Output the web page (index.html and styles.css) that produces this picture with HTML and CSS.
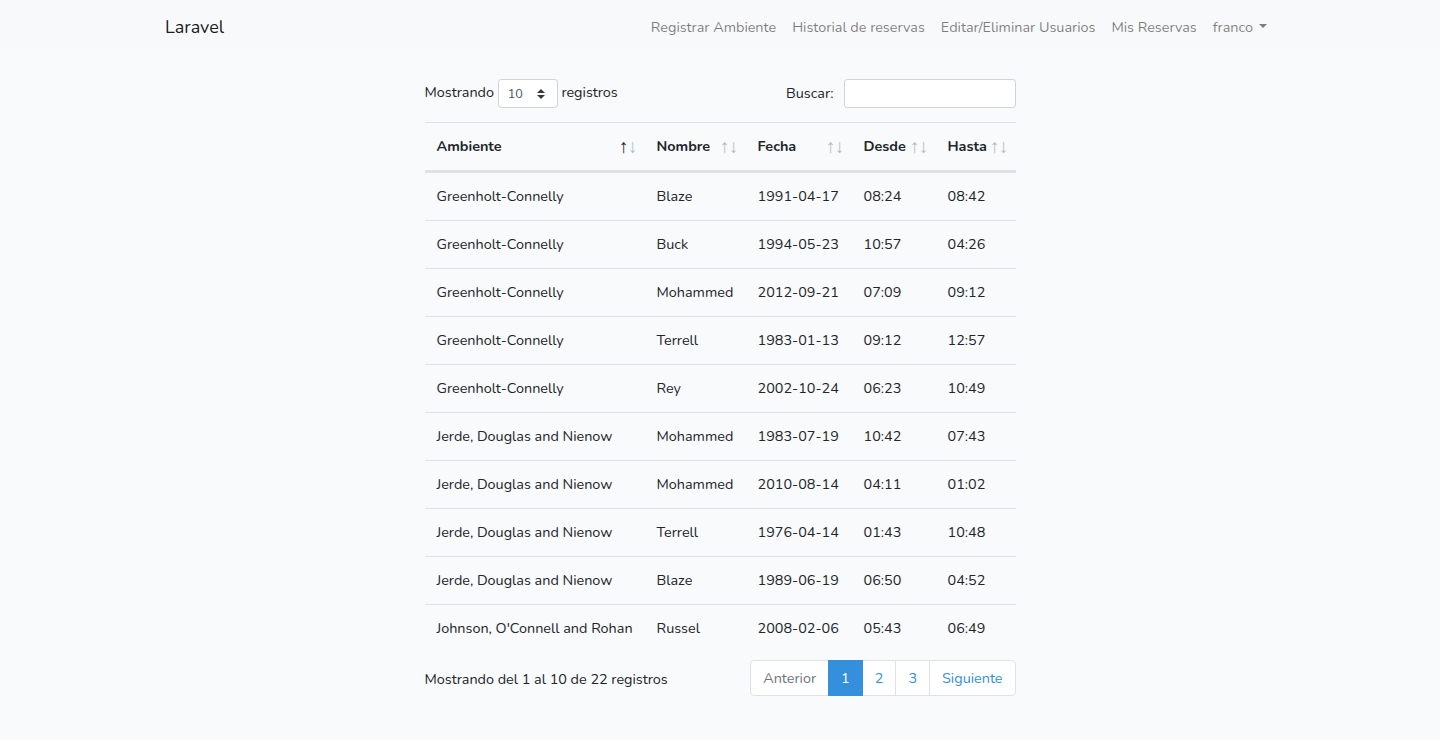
FILE: index.html
```html
<!DOCTYPE html>
<html lang="es">
<head>
<meta charset="utf-8">
<title>Laravel</title>
<link rel="stylesheet" href="styles.css">
</head>
<body>
<nav class="navbar">
  <div class="container nav-inner">
    <a class="brand" href="#">Laravel</a>
    <ul class="nav-links">
      <li><a href="#">Registrar Ambiente</a></li>
      <li><a href="#">Historial de reservas</a></li>
      <li><a href="#">Editar/Eliminar Usuarios</a></li>
      <li><a href="#">Mis Reservas</a></li>
      <li><a href="#" class="dropdown-toggle">franco</a></li>
    </ul>
  </div>
</nav>
<main class="main">
  <div class="dt">
    <div class="dt-top">
      <label class="dt-length">Mostrando <select class="dt-select"><option>10</option><option>25</option><option>50</option><option>100</option></select> registros</label>
      <label class="dt-filter">Buscar:<input type="search" class="dt-input"></label>
    </div>
    <table class="dt-table">
      <colgroup>
        <col class="c1"><col class="c2"><col class="c3"><col class="c4"><col class="c5">
      </colgroup>
      <thead>
        <tr>
          <th class="sort sort-asc">Ambiente</th>
          <th class="sort">Nombre</th>
          <th class="sort">Fecha</th>
          <th class="sort">Desde</th>
          <th class="sort">Hasta</th>
        </tr>
      </thead>
      <tbody>
        <tr><td>Greenholt-Connelly</td><td>Blaze</td><td>1991-04-17</td><td>08:24</td><td>08:42</td></tr>
        <tr><td>Greenholt-Connelly</td><td>Buck</td><td>1994-05-23</td><td>10:57</td><td>04:26</td></tr>
        <tr><td>Greenholt-Connelly</td><td>Mohammed</td><td>2012-09-21</td><td>07:09</td><td>09:12</td></tr>
        <tr><td>Greenholt-Connelly</td><td>Terrell</td><td>1983-01-13</td><td>09:12</td><td>12:57</td></tr>
        <tr><td>Greenholt-Connelly</td><td>Rey</td><td>2002-10-24</td><td>06:23</td><td>10:49</td></tr>
        <tr><td>Jerde, Douglas and Nienow</td><td>Mohammed</td><td>1983-07-19</td><td>10:42</td><td>07:43</td></tr>
        <tr><td>Jerde, Douglas and Nienow</td><td>Mohammed</td><td>2010-08-14</td><td>04:11</td><td>01:02</td></tr>
        <tr><td>Jerde, Douglas and Nienow</td><td>Terrell</td><td>1976-04-14</td><td>01:43</td><td>10:48</td></tr>
        <tr><td>Jerde, Douglas and Nienow</td><td>Blaze</td><td>1989-06-19</td><td>06:50</td><td>04:52</td></tr>
        <tr><td>Johnson, O'Connell and Rohan</td><td>Russel</td><td>2008-02-06</td><td>05:43</td><td>06:49</td></tr>
      </tbody>
    </table>
    <div class="dt-bottom">
      <div class="dt-info">Mostrando del 1 al 10 de 22 registros</div>
      <ul class="pagination">
        <li class="page disabled"><a href="#">Anterior</a></li>
        <li class="page active"><a href="#">1</a></li>
        <li class="page"><a href="#">2</a></li>
        <li class="page"><a href="#">3</a></li>
        <li class="page"><a href="#">Siguiente</a></li>
      </ul>
    </div>
  </div>
</main>
</body>
</html>
```
FILE: styles.css
```css
* { box-sizing: border-box; }
html, body { margin: 0; padding: 0; }
body {
  background: #f8fafc;
  color: #212529;
  font-family: "Nunito", Lato, "Noto Sans", sans-serif;
  font-size: 14.4px;
  line-height: 1.6;
}
a { text-decoration: none; }

.navbar {
  background: #f8f9fa;
  padding: 8px 16px;
}
.container {
  max-width: 1140px;
  margin: 0 auto;
  padding: 0 15px;
}
.nav-inner {
  display: flex;
  align-items: center;
  justify-content: space-between;
}
.brand {
  color: rgba(0,0,0,.9);
  font-size: 18px;
  padding: 5px 0;
  line-height: 1.6;
  margin-right: 16px;
}
.nav-links {
  display: flex;
  list-style: none;
  margin: 0;
  padding: 0;
}
.nav-links a {
  display: block;
  padding: 8px;
  color: rgba(0,0,0,.5);
}
.dropdown-toggle::after {
  content: "";
  display: inline-block;
  margin-left: 6px;
  vertical-align: .255em;
  border-top: .3em solid;
  border-right: .3em solid transparent;
  border-left: .3em solid transparent;
  border-bottom: 0;
}

.main { padding: 24px 0; }
.dt { width: 591px; margin: 0 auto; }

.dt-top {
  display: flex;
  justify-content: space-between;
  align-items: flex-start;
  margin-bottom: 6px;
}
.dt-top label {
  display: inline-block;
  margin-bottom: 8px;
  white-space: nowrap;
}
.dt-select {
  -webkit-appearance: none;
  appearance: none;
  width: 60px;
  height: 29px;
  font: inherit;
  font-size: 12.6px;
  color: #495057;
  padding: 4px 28px 4px 9px;
  border: 1px solid #ced4da;
  border-radius: 3.2px;
  vertical-align: middle;
  background: #fff url("data:image/svg+xml,%3csvg xmlns='http://www.w3.org/2000/svg' width='4' height='5' viewBox='0 0 4 5'%3e%3cpath fill='%23343a40' d='M2 0L0 2h4zm0 5L0 3h4z'/%3e%3c/svg%3e") no-repeat right 12px center / 8px 10px;
  margin: 0;
}
.dt-filter { display: flex; align-items: center; }
.dt-input {
  width: 172px;
  height: 29px;
  margin-left: 10px;
  font: inherit;
  font-size: 12.6px;
  padding: 4px 8px;
  border: 1px solid #ced4da;
  border-radius: 3.2px;
  background: #fff;
}

.dt-table {
  width: 591px;
  table-layout: fixed;
  border-collapse: separate;
  border-spacing: 0;
  margin: 0 0 6px;
}
.c1 { width: 220px; }
.c2 { width: 101px; }
.c3 { width: 106px; }
.c4 { width: 84px; }
.c5 { width: 80px; }
.dt-table th, .dt-table td {
  padding: 12px;
  line-height: 23px;
  text-align: left;
  vertical-align: top;
  white-space: nowrap;
  overflow: hidden;
}
.dt-table th {
  font-weight: 700;
  border-top: 1px solid #dee2e6;
  border-bottom: 2px solid #dee2e6;
  padding-right: 30px;
  position: relative;
}
.dt-table td { border-top: 1px solid #dee2e6; }

.sort::before, .sort::after {
  position: absolute;
  bottom: 12px;
  display: block;
  opacity: .3;
  font-weight: 400;
  font-family: "Liberation Sans", Arial, sans-serif;
  font-size: 19px;
  line-height: 23px;
}
.sort::before { content: "\2191"; right: 16px; }
.sort::after { content: "\2193"; right: 7px; }
.sort-asc::before { opacity: 1; }

.dt-bottom {
  display: flex;
  justify-content: space-between;
  align-items: flex-start;
}
.dt-info { padding-top: 10px; }
.pagination {
  display: flex;
  list-style: none;
  margin: 2px 0;
  padding: 0;
}
.page a {
  display: block;
  padding: 8px 12px;
  line-height: 1.25;
  color: #3490dc;
  background: #fff;
  border: 1px solid #dee2e6;
  margin-left: -1px;
}
.page:first-child a { margin-left: 0; border-radius: 4px 0 0 4px; }
.page:last-child a { border-radius: 0 4px 4px 0; }
.page.disabled a { color: #6c757d; }
.page.active a {
  background: #3490dc;
  border-color: #3490dc;
  color: #fff;
  position: relative;
}
```
